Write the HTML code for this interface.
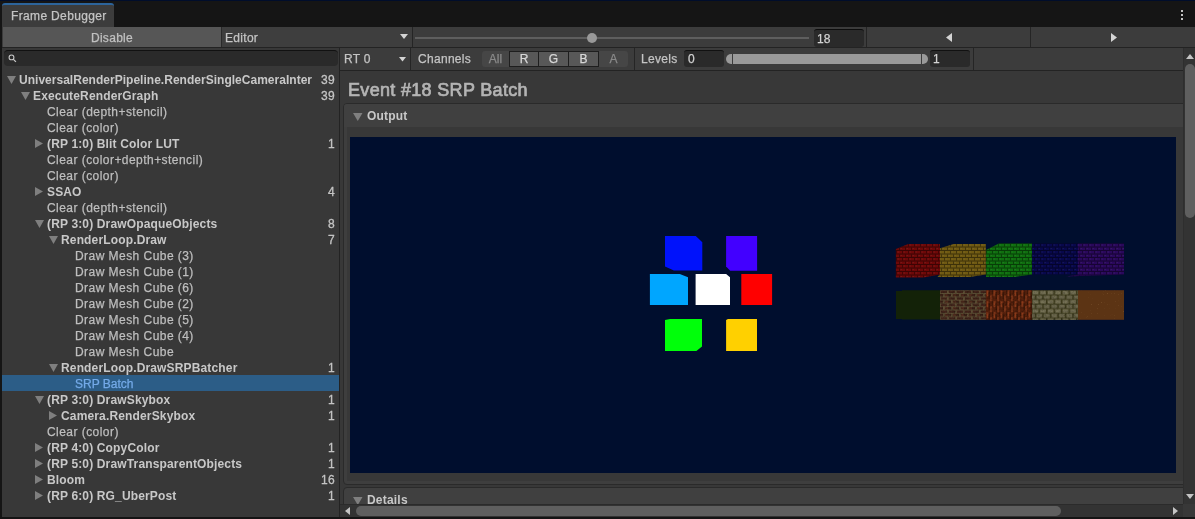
<!DOCTYPE html>
<html><head><meta charset="utf-8">
<style>
*{margin:0;padding:0;box-sizing:border-box}
html,body{width:1195px;height:519px;overflow:hidden;background:#151515;font-family:"Liberation Sans",sans-serif;font-size:12px;color:#c4c4c4}
.a{position:absolute}
.t{position:absolute;white-space:nowrap;line-height:16px;will-change:transform;-webkit-text-stroke-width:0.25px}
svg{position:absolute;display:block}
.b{font-weight:bold;color:#c8c8c8;letter-spacing:0.15px;-webkit-text-stroke-width:0}
.n{letter-spacing:0.45px;color:#bebebe}
.c{right:4px;text-align:right;font-weight:normal;letter-spacing:0.4px;color:#c4c4c4;-webkit-text-stroke-width:0.3px}
</style></head><body>
<!-- top navy line -->
<div class="a" style="left:0;top:0;width:1195px;height:1px;background:#000d2b"></div>
<!-- tab -->
<div class="a" style="left:2px;top:3px;width:112px;height:24px;background:#3c3c3c;border-top:2px solid #2c649c;border-radius:3px 3px 0 0"></div>
<div class="t" style="left:11px;top:8px;color:#c4c4c4;letter-spacing:0.35px">Frame Debugger</div>
<!-- kebab -->
<div class="a" style="left:1181px;top:10px;width:2px;height:2px;background:#c4c4c4"></div>
<div class="a" style="left:1181px;top:14px;width:2px;height:2px;background:#c4c4c4"></div>
<div class="a" style="left:1181px;top:18px;width:2px;height:2px;background:#c4c4c4"></div>

<!-- toolbar 1 -->
<div class="a" style="left:2px;top:27px;width:1193px;height:20px;background:#3c3c3c"></div>
<div class="a" style="left:3px;top:27px;width:218px;height:20px;background:#565656"></div>
<div class="t" style="left:3px;top:30px;width:218px;text-align:center;letter-spacing:0.3px;color:#c0c0c0">Disable</div>
<div class="a" style="left:221px;top:27px;width:1px;height:20px;background:#2a2a2a"></div>
<div class="a" style="left:222px;top:27px;width:190px;height:20px;background:#3e3e3e"></div>
<div class="t" style="left:225px;top:30px;letter-spacing:0.3px">Editor</div>
<svg style="left:400px;top:34px" width="8" height="5"><path d="M0 0H8L4 5Z" fill="#d4d4d4"/></svg>
<div class="a" style="left:412px;top:27px;width:1px;height:20px;background:#252525"></div>
<div class="a" style="left:415px;top:37px;width:394px;height:2px;background:#5e5e5e"></div>
<div class="a" style="left:587px;top:33px;width:10px;height:10px;border-radius:50%;background:#999"></div>
<div class="a" style="left:814px;top:29px;width:50px;height:18px;background:#2a2a2a;border-radius:3px;border-top:1px solid #0d0d0d"></div>
<div class="t" style="left:817px;top:31px;color:#d2d2d2">18</div>
<div class="a" style="left:866px;top:27px;width:1px;height:20px;background:#252525"></div>
<div class="a" style="left:1030px;top:27px;width:1px;height:20px;background:#252525"></div>
<svg style="left:946px;top:33px" width="6" height="9"><path d="M6 0V9L0 4.5Z" fill="#d4d4d4"/></svg>
<svg style="left:1111px;top:33px" width="6" height="9"><path d="M0 0V9L6 4.5Z" fill="#d4d4d4"/></svg>
<div class="a" style="left:2px;top:47px;width:1193px;height:1px;background:#232323"></div>

<!-- left panel -->
<div class="a" style="left:2px;top:48px;width:337px;height:469px;background:#383838"></div>
<div class="a" style="left:4px;top:50px;width:334px;height:16px;background:#2a2a2a;border-radius:4px;border-top:1px solid #111"></div>
<svg style="left:8px;top:54px" width="10" height="10"><circle cx="3.5" cy="3.4" r="2.4" fill="none" stroke="#c8c8c8" stroke-width="1.1"/><path d="M5.2 5.1L7.9 7.9" stroke="#c8c8c8" stroke-width="1.3"/></svg>
<div class="a" style="left:339px;top:48px;width:1px;height:469px;background:#232323"></div>
<div id="tree" class="a" style="left:0;top:0;width:339px;height:516px;overflow:hidden">
<svg style="left:7px;top:76px" width="9" height="8"><path d="M0 0H9L4.5 8Z" fill="#7f7f7f"/></svg>
<div class="t b" style="left:19px;top:72px;width:294px;overflow:hidden;letter-spacing:0.02px;">UniversalRenderPipeline.RenderSingleCameraInter</div>
<div class="t b c" style="top:72px">39</div>
<svg style="left:21px;top:92px" width="9" height="8"><path d="M0 0H9L4.5 8Z" fill="#7f7f7f"/></svg>
<div class="t b" style="left:33px;top:88px;">ExecuteRenderGraph</div>
<div class="t b c" style="top:88px">39</div>
<div class="t n" style="left:47px;top:104px;">Clear (depth+stencil)</div>
<div class="t n" style="left:47px;top:120px;">Clear (color)</div>
<svg style="left:35px;top:139px" width="8" height="9"><path d="M0 0V9L8 4.5Z" fill="#7f7f7f"/></svg>
<div class="t b" style="left:47px;top:136px;">(RP 1:0) Blit Color LUT</div>
<div class="t b c" style="top:136px">1</div>
<div class="t n" style="left:47px;top:152px;">Clear (color+depth+stencil)</div>
<div class="t n" style="left:47px;top:168px;">Clear (color)</div>
<svg style="left:35px;top:187px" width="8" height="9"><path d="M0 0V9L8 4.5Z" fill="#7f7f7f"/></svg>
<div class="t b" style="left:47px;top:184px;">SSAO</div>
<div class="t b c" style="top:184px">4</div>
<div class="t n" style="left:47px;top:200px;">Clear (depth+stencil)</div>
<svg style="left:35px;top:220px" width="9" height="8"><path d="M0 0H9L4.5 8Z" fill="#7f7f7f"/></svg>
<div class="t b" style="left:47px;top:216px;">(RP 3:0) DrawOpaqueObjects</div>
<div class="t b c" style="top:216px">8</div>
<svg style="left:49px;top:236px" width="9" height="8"><path d="M0 0H9L4.5 8Z" fill="#7f7f7f"/></svg>
<div class="t b" style="left:61px;top:232px;">RenderLoop.Draw</div>
<div class="t b c" style="top:232px">7</div>
<div class="t n" style="left:75px;top:248px;">Draw Mesh Cube (3)</div>
<div class="t n" style="left:75px;top:264px;">Draw Mesh Cube (1)</div>
<div class="t n" style="left:75px;top:280px;">Draw Mesh Cube (6)</div>
<div class="t n" style="left:75px;top:296px;">Draw Mesh Cube (2)</div>
<div class="t n" style="left:75px;top:312px;">Draw Mesh Cube (5)</div>
<div class="t n" style="left:75px;top:328px;">Draw Mesh Cube (4)</div>
<div class="t n" style="left:75px;top:344px;">Draw Mesh Cube</div>
<svg style="left:49px;top:364px" width="9" height="8"><path d="M0 0H9L4.5 8Z" fill="#7f7f7f"/></svg>
<div class="t b" style="left:61px;top:360px;">RenderLoop.DrawSRPBatcher</div>
<div class="t b c" style="top:360px">1</div>
<div class="a" style="left:2px;top:375px;width:337px;height:16px;background:#2c5d87"></div>
<div class="t n" style="left:75px;top:376px;color:#74aae8;letter-spacing:0;">SRP Batch</div>
<svg style="left:35px;top:396px" width="9" height="8"><path d="M0 0H9L4.5 8Z" fill="#7f7f7f"/></svg>
<div class="t b" style="left:47px;top:392px;">(RP 3:0) DrawSkybox</div>
<div class="t b c" style="top:392px">1</div>
<svg style="left:49px;top:411px" width="8" height="9"><path d="M0 0V9L8 4.5Z" fill="#7f7f7f"/></svg>
<div class="t b" style="left:61px;top:408px;">Camera.RenderSkybox</div>
<div class="t b c" style="top:408px">1</div>
<div class="t n" style="left:47px;top:424px;">Clear (color)</div>
<svg style="left:35px;top:443px" width="8" height="9"><path d="M0 0V9L8 4.5Z" fill="#7f7f7f"/></svg>
<div class="t b" style="left:47px;top:440px;">(RP 4:0) CopyColor</div>
<div class="t b c" style="top:440px">1</div>
<svg style="left:35px;top:459px" width="8" height="9"><path d="M0 0V9L8 4.5Z" fill="#7f7f7f"/></svg>
<div class="t b" style="left:47px;top:456px;">(RP 5:0) DrawTransparentObjects</div>
<div class="t b c" style="top:456px">1</div>
<svg style="left:35px;top:475px" width="8" height="9"><path d="M0 0V9L8 4.5Z" fill="#7f7f7f"/></svg>
<div class="t b" style="left:47px;top:472px;">Bloom</div>
<div class="t b c" style="top:472px">16</div>
<svg style="left:35px;top:491px" width="8" height="9"><path d="M0 0V9L8 4.5Z" fill="#7f7f7f"/></svg>
<div class="t b" style="left:47px;top:488px;">(RP 6:0) RG_UberPost</div>
<div class="t b c" style="top:488px">1</div>
</div>

<!-- right panel -->
<div class="a" style="left:340px;top:48px;width:844px;height:469px;background:#383838"></div>
<!-- toolbar 2 -->
<div class="a" style="left:340px;top:48px;width:844px;height:22px;background:#3c3c3c"></div>
<div class="a" style="left:340px;top:70px;width:844px;height:1px;background:#232323"></div>
<div class="t" style="left:344px;top:51px;letter-spacing:0.3px">RT 0</div>
<svg style="left:399px;top:57px" width="7" height="5"><path d="M0 0H7L3.5 4.5Z" fill="#d4d4d4"/></svg>
<div class="a" style="left:410px;top:48px;width:1px;height:22px;background:#252525"></div>
<div class="t" style="left:418px;top:51px;letter-spacing:0.3px">Channels</div>
<div class="a" style="left:482px;top:51px;width:146px;height:16px;background:#464646;border-radius:3px"></div>
<div class="a" style="left:509px;top:51px;width:90px;height:16px;background:#1e1e1e"></div>
<div class="a" style="left:510px;top:52px;width:28px;height:14px;background:#585858"></div>
<div class="a" style="left:539px;top:52px;width:29px;height:14px;background:#585858"></div>
<div class="a" style="left:569px;top:52px;width:29px;height:14px;background:#585858"></div>
<div class="t" style="left:482px;top:51px;width:27px;text-align:center;color:#8a8a8a">All</div>
<div class="t" style="left:510px;top:51px;width:28px;text-align:center;color:#d8d8d8">R</div>
<div class="t" style="left:539px;top:51px;width:29px;text-align:center;color:#d8d8d8">G</div>
<div class="t" style="left:569px;top:51px;width:29px;text-align:center;color:#d8d8d8">B</div>
<div class="t" style="left:599px;top:51px;width:29px;text-align:center;color:#8a8a8a">A</div>
<div class="a" style="left:634px;top:48px;width:1px;height:22px;background:#252525"></div>
<div class="t" style="left:641px;top:51px;letter-spacing:0.3px">Levels</div>
<div class="a" style="left:684px;top:50px;width:40px;height:17px;background:#2a2a2a;border-radius:3px;border-top:1px solid #111"></div>
<div class="t" style="left:688px;top:51px;color:#d2d2d2">0</div>
<div class="a" style="left:726px;top:54px;width:202px;height:10px;background:#9a9a9a;border-radius:5px"></div>
<div class="a" style="left:732px;top:54px;width:1px;height:10px;background:#3c3c3c"></div>
<div class="a" style="left:921px;top:54px;width:1px;height:10px;background:#3c3c3c"></div>
<div class="a" style="left:930px;top:50px;width:40px;height:17px;background:#2a2a2a;border-radius:3px;border-top:1px solid #111"></div>
<div class="t" style="left:933px;top:51px;color:#d2d2d2">1</div>
<div class="a" style="left:973px;top:48px;width:1px;height:22px;background:#252525"></div>

<!-- heading -->
<div class="t" style="left:348px;top:80px;font-size:18px;line-height:20px;font-weight:normal;letter-spacing:0.32px;-webkit-text-stroke-width:0.7px;color:#b4b4b4">Event #18 SRP Batch</div>

<!-- output box -->
<div class="a" style="left:343px;top:103px;width:860px;height:382px;background:#3e3e3e;border:1px solid #2a2a2a;border-radius:4px"></div>
<div class="a" style="left:344px;top:104px;width:850px;height:23px;background:#404040;border-radius:3px 3px 0 0"></div>
<div class="a" style="left:347px;top:127px;width:850px;height:354px;background:#383838"></div>
<svg style="left:353px;top:113px" width="10" height="8"><path d="M0 0H9.5L4.75 8Z" fill="#7f7f7f"/></svg>
<div class="t" style="left:367px;top:108px;font-weight:bold;color:#c8c8c8;letter-spacing:0.2px;-webkit-text-stroke-width:0">Output</div>
<div class="a" style="left:350px;top:137px;width:826px;height:336px;background:#000e2e"></div>
<svg style="left:0;top:0" width="1195" height="519" viewBox="0 0 1195 519">
<defs>
<clipPath id="toprow"><path d="M895.9 249L908.2 244.1H940V274.4L923.5 277.4H895.9Z"/><path d="M940 248.2L953.6 244.1H985.8V274.4L970 277H937.5L940 274Z"/><path d="M986 249.9L998.8 243.6H1032V274.4L1015 277H986Z"/><path d="M1032 243.6H1077.9V274.4H1032Z"/><path d="M1077.9 243.6H1124V274.4L1066 276.5L1077.9 274.4Z"/></clipPath>

<pattern id="brk" x="896" y="244" width="6" height="7" patternUnits="userSpaceOnUse">
<rect y="2.5" width="6" height="1" fill="rgba(0,0,0,0.45)"/>
<rect y="6" width="6" height="1" fill="rgba(0,0,0,0.45)"/>
<rect x="0" y="0" width="1" height="2.5" fill="rgba(0,0,0,0.4)"/>
<rect x="3" y="3.5" width="1" height="2.5" fill="rgba(0,0,0,0.4)"/>
<rect x="1.5" y="0.5" width="1.5" height="1" fill="rgba(255,255,255,0.06)"/>
<rect x="4.5" y="4" width="1.5" height="1" fill="rgba(255,255,255,0.06)"/>
</pattern>
<pattern id="brk2" x="940" y="290.2" width="8" height="6.6" patternUnits="userSpaceOnUse">
<rect x="0.8" y="0.5" width="6.2" height="2.3" fill="#42241a"/>
<rect x="4.8" y="3.8" width="6.2" height="2.3" fill="#4e2a1c"/>
<rect x="-3.2" y="3.8" width="6.2" height="2.3" fill="#3a2016"/>
</pattern>
<pattern id="wood" x="986" y="290.2" width="7" height="11" patternUnits="userSpaceOnUse">
<rect x="0.5" y="0" width="2" height="6" fill="#8a3a1a"/>
<rect x="4" y="5" width="2" height="6" fill="#7a3418"/>
<rect x="2.5" y="2" width="1.5" height="7" fill="#3e1808"/>
<rect x="6" y="0" width="1" height="4" fill="#3e1808"/>
</pattern>
<pattern id="stone" x="1032" y="290.2" width="7.5" height="9.2" patternUnits="userSpaceOnUse">
<rect x="0.6" y="0.6" width="5.8" height="3.6" fill="#747054"/>
<rect x="4.4" y="5.2" width="5.8" height="3.6" fill="#6a664c"/>
<rect x="-3.1" y="5.2" width="5.8" height="3.6" fill="#6a664c"/>
</pattern>
<pattern id="stone2" x="1035.7" y="292.5" width="7.5" height="9.2" patternUnits="userSpaceOnUse">
<rect x="0.6" y="0.6" width="5.6" height="3.4" fill="#767258"/>
</pattern>
<filter id="nz" x="0" y="0" width="100%" height="100%"><feTurbulence type="fractalNoise" baseFrequency="0.55" numOctaves="2" seed="7"/><feColorMatrix values="0 0 0 0 0  0 0 0 0 0  0 0 0 0 0  0 0 0 -1.6 1.0"/><feComposite in2="SourceGraphic" operator="in"/></filter>
<filter id="nzl" x="0" y="0" width="100%" height="100%"><feTurbulence type="fractalNoise" baseFrequency="0.7" numOctaves="2" seed="11"/><feColorMatrix values="0 0 0 0 0.75  0 0 0 0 0.45  0 0 0 0 0.2  0 0 0 1.2 -0.85"/><feComposite in2="SourceGraphic" operator="in"/></filter>
</defs>
<!-- colored cubes -->
<path d="M665 236H695.8L702.3 242.3V270.5H673.9L665 266.6Z" fill="#0012fb"/>
<path d="M726.1 236H757.1V270.7H730.2L726.1 266.4Z" fill="#4200ff"/>
<path d="M649.9 274H679.8L688 277.2V305H649.9Z" fill="#00a6ff"/>
<path d="M695.6 274H726.1L730 277.2V305H695.6Z" fill="#ffffff"/>
<path d="M741.3 274H772.1V305H741.3Z" fill="#ff0000"/>
<path d="M665 320L670 319H702V346.6L696.4 351H665Z" fill="#00ff0a"/>
<path d="M726.1 320L728 319H757V351H726.1Z" fill="#ffd000"/>
<!-- textured cubes top row -->
<path d="M895.9 249L908.2 244.1H940V274.4L923.5 277.4H895.9Z" fill="#6e0808"/>
<path d="M940 248.2L953.6 244.1H985.8V274.4L970 277H937.5L940 274Z" fill="#705a12"/>
<path d="M986 249.9L998.8 243.6H1032V274.4L1015 277H986Z" fill="#0f700f"/>
<path d="M1032 243.6H1077.9V274.4H1032Z" fill="#08084c"/>
<path d="M1077.9 243.6H1124V274.4L1066 276.5L1077.9 274.4Z" fill="#2a085c"/>
<rect x="895" y="243" width="230" height="35" fill="url(#brk)" clip-path="url(#toprow)"/>
<!-- bottom row -->
<path d="M896 291H902V290.2H940V319.6H902V319H896Z" fill="#132208"/>
<rect x="940" y="290.2" width="46" height="29.6" fill="#5c4e34"/>
<rect x="940" y="290.2" width="46" height="29.6" fill="url(#brk2)"/>
<rect x="940" y="290.2" width="46" height="29.6" fill="#000" filter="url(#nz)" opacity="0.35"/>
<rect x="986" y="290.2" width="46" height="29.6" fill="#55200c"/>
<rect x="986" y="290.2" width="46" height="29.6" fill="url(#wood)"/>
<rect x="986" y="290.2" width="46" height="29.6" fill="#000" filter="url(#nz)" opacity="0.3"/>
<rect x="1032" y="290.2" width="46" height="29.6" fill="#3c3a1c"/>
<rect x="1032" y="290.2" width="46" height="29.6" fill="url(#stone)"/>
<rect x="1032" y="290.2" width="46" height="29.6" fill="#000" filter="url(#nz)" opacity="0.25"/>
<rect x="1078" y="290.2" width="46" height="29.6" fill="#5c3414"/>
<rect x="1078" y="290.2" width="46" height="29.6" fill="#000" filter="url(#nzl)"/>
</svg>


<!-- details box -->
<div class="a" style="left:343px;top:487px;width:860px;height:40px;background:#404040;border:1px solid #2a2a2a;border-radius:4px"></div>
<svg style="left:353px;top:497px" width="10" height="8"><path d="M0 0H9.5L4.75 8Z" fill="#7f7f7f"/></svg>
<div class="t" style="left:367px;top:492px;font-weight:bold;color:#c8c8c8;letter-spacing:0.2px;-webkit-text-stroke-width:0">Details</div>

<!-- h scrollbar -->
<div class="a" style="left:340px;top:504px;width:844px;height:13px;background:#333;border-top:1px solid #2b2b2b"></div>
<svg style="left:345px;top:507px" width="5" height="8"><path d="M5 0V8L0 4Z" fill="#c4c4c4"/></svg>
<div class="a" style="left:356px;top:506px;width:705px;height:10px;background:#5f5f5f;border-radius:5px"></div>
<svg style="left:1173px;top:507px" width="5" height="8"><path d="M0 0V8L5 4Z" fill="#c4c4c4"/></svg>
<!-- v scrollbar -->
<div class="a" style="left:1183px;top:48px;width:12px;height:456px;background:#333;border-left:1px solid #2e2e2e"></div>
<div class="a" style="left:1183px;top:504px;width:12px;height:13px;background:#383838"></div>
<svg style="left:1186px;top:54px" width="8" height="5"><path d="M0 5H8L4 0Z" fill="#c4c4c4"/></svg>
<div class="a" style="left:1185px;top:64px;width:10px;height:154px;background:#5f5f5f;border-radius:5px"></div>
<svg style="left:1186px;top:494px" width="8" height="5"><path d="M0 0H8L4 5Z" fill="#c4c4c4"/></svg>

<!-- bottom line -->
<div class="a" style="left:0;top:517px;width:1195px;height:2px;background:#141414"></div>
</body></html>
